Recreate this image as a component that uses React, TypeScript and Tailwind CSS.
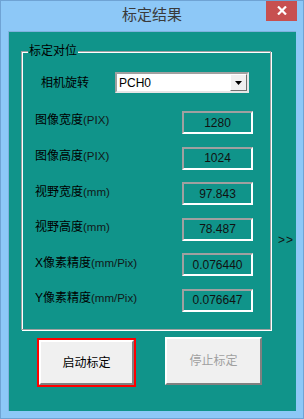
import React from 'react';

const font = { fontFamily: '"Liberation Sans", "Noto Sans CJK SC", sans-serif' };

const rows = [
  { label: '图像宽度', unit: '(PIX)', value: '1280' },
  { label: '图像高度', unit: '(PIX)', value: '1024' },
  { label: '视野宽度', unit: '(mm)', value: '97.843' },
  { label: '视野高度', unit: '(mm)', value: '78.487' },
  { label: 'X像素精度', unit: '(mm/Pix)', value: '0.076440' },
  { label: 'Y像素精度', unit: '(mm/Pix)', value: '0.076647' },
];

export default function App() {
  return (
    <div
      style={font}
      className="w-[304px] h-[419px] bg-[#8dc8f7] border border-[#6fa3d4] flex flex-col overflow-hidden"
    >
      {/* title bar */}
      <div className="relative h-[30px] flex items-center justify-center flex-shrink-0">
        <span className="text-[15px] text-[#3a3a3a] mt-[-2px]">标定结果</span>
        <div className="absolute right-[6px] top-[-1px] w-[31px] h-[21px] bg-[#c75050] flex items-center justify-center">
          <svg width="10" height="9" viewBox="0 0 10 9">
            <path d="M1 0.5 L9 8.5 M9 0.5 L1 8.5" stroke="white" strokeWidth="2.2" />
          </svg>
        </div>
      </div>

      {/* client area */}
      <div className="mx-[7px] h-[380px] bg-[#10948a] border-t border-l border-[#7fb2de] flex flex-col">
        <div className="flex items-start">
          <div className="relative ml-[12px] mt-[19px] w-[250px] h-[279px] border border-[#a0a0a0] shadow-[inset_1px_1px_0_white,1px_1px_0_white]">
            <span className="absolute left-[6px] top-[-9px] bg-[#10948a] px-[1px] text-[12px] leading-[16px] text-black">
              标定对位
            </span>
            <div className="pl-[13px] pt-[20px] flex flex-col">
              {/* combo row */}
              <div className="flex items-center h-[21px]">
                <span className="w-[80px] pl-[6px] text-[12px] text-black">相机旋转</span>
                <div className="w-[134px] h-[21px] bg-white border-2 border-t-[#a0a0a0] border-l-[#a0a0a0] border-b-[#e6e6e6] border-r-[#e6e6e6] flex items-center">
                  <span className="flex-1 pl-[2px] text-[12px] text-black">PCH0</span>
                  <div className="w-[17px] h-full bg-[#f0f0f0] border border-t-white border-l-white border-b-[#707070] border-r-[#707070] flex items-center justify-center">
                    <svg width="7" height="4" viewBox="0 0 7 4">
                      <path d="M0 0 H7 L3.5 4 Z" fill="black" />
                    </svg>
                  </div>
                </div>
              </div>

              {/* value rows */}
              <div className="mt-[18px] flex flex-col gap-[12.6px]">
                {rows.map((r) => (
                  <div key={r.label} className="flex items-center h-[23px]">
                    <span className="w-[147px] text-[12px] text-black mb-[4px] whitespace-nowrap">
                      {r.label}
                      <span className="text-[11.5px] text-[#101818]">{r.unit}</span>
                    </span>
                    <div className="w-[71px] h-[23px] border-2 border-t-[#a0a0a0] border-l-[#a0a0a0] border-b-white border-r-white flex items-center justify-center text-[12px] text-[#111]">
                      {r.value}
                    </div>
                  </div>
                ))}
              </div>
            </div>
          </div>
          <span className="ml-[7px] mt-[199px] text-[12px] text-[#111] tracking-[1px]">&gt;&gt;</span>
        </div>

        {/* buttons */}
        <div className="flex items-start mt-[8px]">
          <div className="ml-[28px] w-[99px] h-[49px] border-2 border-[#ff0000]">
            <div className="w-full h-full bg-[#f0f0f0] border-2 border-t-white border-l-white border-b-[#808080] border-r-[#808080] flex items-center justify-center text-[12px] text-black">
              启动标定
            </div>
          </div>
          <div className="ml-[29px] mt-[-1px] w-[97px] h-[48px] bg-[#f0f0f0] border-2 border-t-white border-l-white border-b-[#808080] border-r-[#808080] flex items-center justify-center text-[12px] text-[#a0a0a0]">
            停止标定
          </div>
        </div>
      </div>
    </div>
  );
}
